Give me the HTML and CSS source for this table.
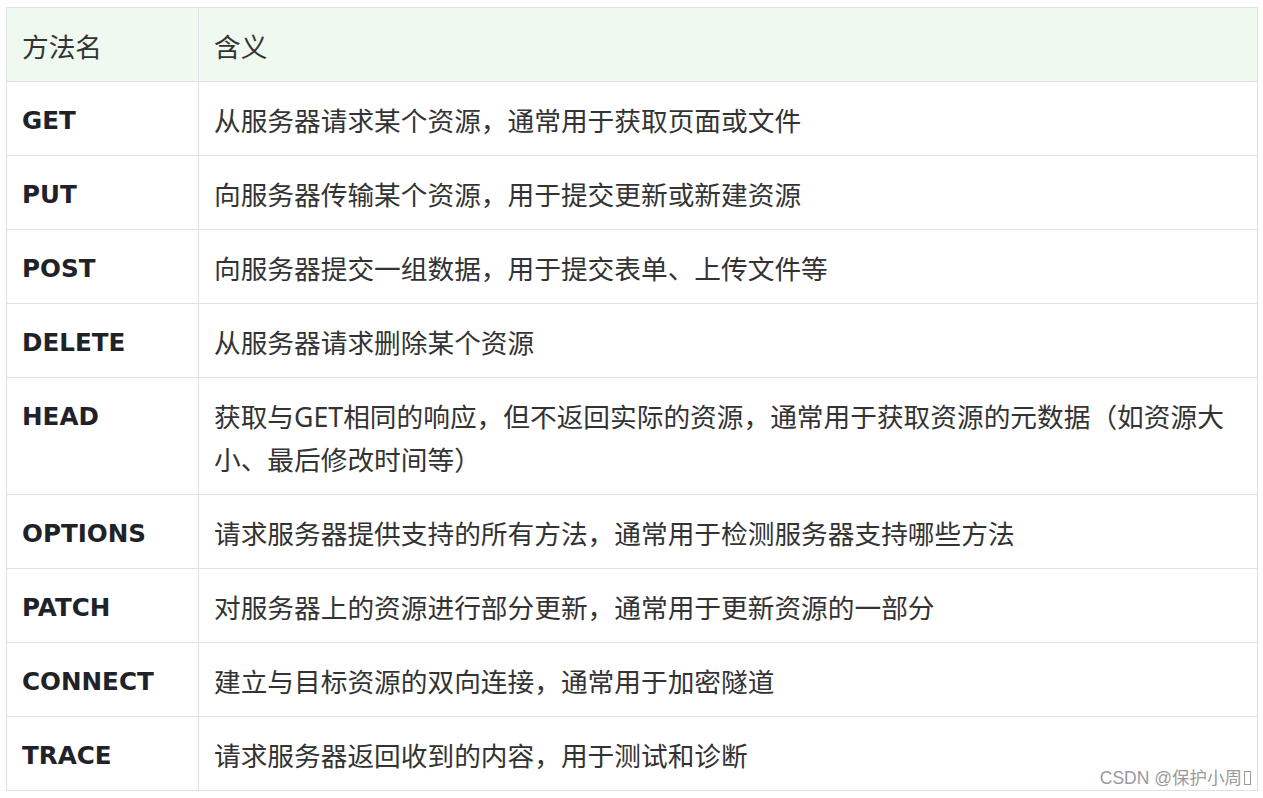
FILE: index.html
```html
<!DOCTYPE html>
<html lang="zh-CN">
<head>
<meta charset="utf-8">
<link rel="stylesheet" href="styles.css">
</head>
<body>
<div class="page">
<table class="methods">
  <thead>
    <tr><th class="c1">方法名</th><th class="c2">含义</th></tr>
  </thead>
  <tbody>
    <tr><td class="c1"><strong>GET</strong></td><td class="c2">从服务器请求某个资源，通常用于获取页面或文件</td></tr>
    <tr><td class="c1"><strong>PUT</strong></td><td class="c2">向服务器传输某个资源，用于提交更新或新建资源</td></tr>
    <tr><td class="c1"><strong>POST</strong></td><td class="c2">向服务器提交一组数据，用于提交表单、上传文件等</td></tr>
    <tr><td class="c1"><strong>DELETE</strong></td><td class="c2">从服务器请求删除某个资源</td></tr>
    <tr><td class="c1"><strong>HEAD</strong></td><td class="c2">获取与GET相同的响应，但不返回实际的资源，通常用于获取资源的元数据（如资源大小、最后修改时间等）</td></tr>
    <tr><td class="c1"><strong>OPTIONS</strong></td><td class="c2">请求服务器提供支持的所有方法，通常用于检测服务器支持哪些方法</td></tr>
    <tr><td class="c1"><strong>PATCH</strong></td><td class="c2">对服务器上的资源进行部分更新，通常用于更新资源的一部分</td></tr>
    <tr><td class="c1"><strong>CONNECT</strong></td><td class="c2">建立与目标资源的双向连接，通常用于加密隧道</td></tr>
    <tr><td class="c1"><strong>TRACE</strong></td><td class="c2">请求服务器返回收到的内容，用于测试和诊断</td></tr>
  </tbody>
</table>
<div class="watermark">CSDN @保护小周<span class="tofu"></span></div>
</div>
</body>
</html>
```
FILE: styles.css
```css
html, body {
  margin: 0;
  padding: 0;
  background: #ffffff;
}
.page {
  position: relative;
  padding: 7px 5px 6px 6px;
}
.methods {
  width: 100%;
  border-collapse: collapse;
  table-layout: fixed;
  font-family: "Noto Sans", "Noto Sans CJK SC", sans-serif;
  font-size: 26.7px;
  line-height: 43px;
  color: #333333;
}
.methods th,
.methods td {
  border: 1px solid #dfe2e5;
  padding: 16.5px 15px 13.5px;
  text-align: left;
  vertical-align: top;
  font-weight: normal;
}
.methods thead th {
  background: #f0f9f0;
}
.methods .c1 {
  width: 161px;
}
.methods strong {
  display: block;
  font-family: "DejaVu Sans", "Noto Sans CJK SC", sans-serif;
  font-weight: bold;
  font-size: 24.6px;
  line-height: 43px;
  color: #1f2329;
}
.watermark {
  position: absolute;
  right: 12px;
  bottom: 9px;
  font-family: "Liberation Sans", "Noto Sans CJK SC", sans-serif;
  font-size: 17.5px;
  line-height: 20px;
  color: #9a9a9a;
  display: flex;
  align-items: center;
}
.tofu {
  display: inline-block;
  width: 5px;
  height: 12px;
  border: 1px solid #9a9a9a;
  margin-left: 2px;
}
```
